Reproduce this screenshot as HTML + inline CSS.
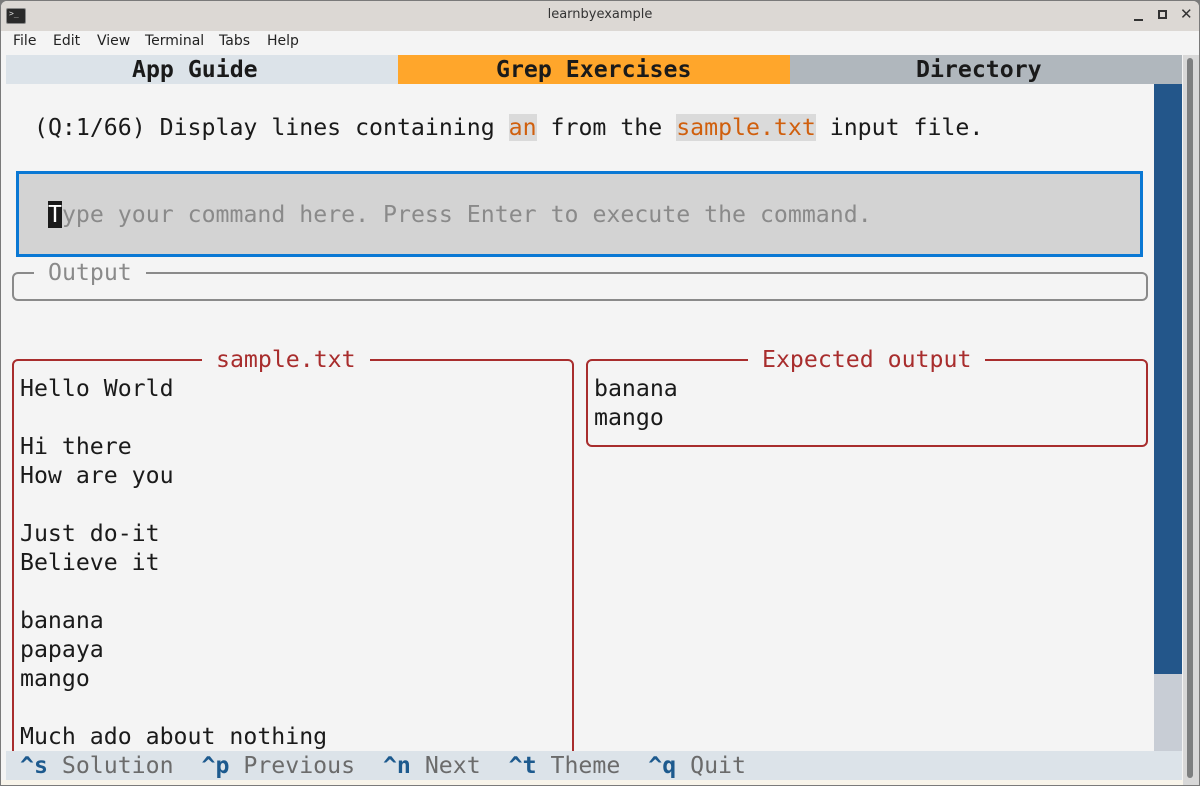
<!DOCTYPE html>
<html><head><meta charset="utf-8"><style>
*{margin:0;padding:0;box-sizing:border-box}
html,body{width:1200px;height:786px;overflow:hidden}
body{background:#7a7a7a;position:relative;font-family:"DejaVu Sans Mono","Liberation Mono",monospace}
.a{position:absolute}
.m{font-family:"DejaVu Sans Mono",monospace;font-size:23.2px;line-height:29px;white-space:pre;color:#1a1a1a}
.ui{font-family:"DejaVu Sans","Liberation Sans",sans-serif;white-space:nowrap}
.mn{position:absolute;top:33px;font-size:14px;color:#222}
</style></head><body>
<div class="a" style="left:1px;top:1px;width:1198px;height:784px;background:#f4f4f4;border-radius:6px 6px 0 0;overflow:hidden">
<div class="a" style="left:0;top:0;width:1198px;height:30px;background:#dcd8d4"></div>
</div>
<div class="a" style="left:6px;top:8px;width:20px;height:16px;background:#2a2a2a;border:1px solid #888;border-radius:2px;color:#ddd;font-size:8px;line-height:10px;padding-left:2px">&gt;_</div>
<div class="a ui" style="left:0;top:7px;width:1200px;text-align:center;font-size:13px;color:#333">learnbyexample</div>
<div class="a" style="left:1134px;top:19px;width:9px;height:2px;background:#333"></div>
<div class="a" style="left:1158px;top:10px;width:9px;height:9px;border:2px solid #333"></div>
<div class="a ui" style="left:1180px;top:5px;font-size:15px;font-weight:bold;color:#333">✕</div>
<div class="ui mn" style="left:13px">File</div>
<div class="ui mn" style="left:53px">Edit</div>
<div class="ui mn" style="left:97px">View</div>
<div class="ui mn" style="left:145px">Terminal</div>
<div class="ui mn" style="left:219px">Tabs</div>
<div class="ui mn" style="left:267px">Help</div>
<div class="a" style="left:6px;top:55px;width:392px;height:29px;background:#dce3e9"></div>
<div class="a" style="left:398px;top:55px;width:392px;height:29px;background:#ffa62b"></div>
<div class="a" style="left:790px;top:55px;width:392px;height:29px;background:#b0b7bd"></div>
<div class="a m" style="left:132px;top:55px;font-weight:bold">App Guide</div>
<div class="a m" style="left:496px;top:55px;font-weight:bold">Grep Exercises</div>
<div class="a m" style="left:916px;top:55px;font-weight:bold">Directory</div>
<div class="a" style="left:1154px;top:84px;width:28px;height:590px;background:#23568a"></div>
<div class="a" style="left:1154px;top:674px;width:28px;height:77px;background:#c8cdd5"></div>
<div class="a" style="left:1183px;top:55px;width:16px;height:730px;background:#d8d8d8"></div>
<div class="a" style="left:1187px;top:58px;width:6px;height:720px;background:#7d7f80;border-radius:3px"></div>
<div class="a m" style="left:34px;top:113px">(Q:1/66) Display lines containing <span style="background:#dadada;color:#d05f0d">an</span> from the <span style="background:#dadada;color:#d05f0d">sample.txt</span> input file.</div>
<div class="a" style="left:16px;top:171px;width:1127px;height:86px;background:#d3d3d3;border:3px solid #0a78d4"></div>
<div class="a m" style="left:48px;top:200px;color:#8a8a8a"><span style="background:#1a1a1a;color:#fff">T</span>ype your command here. Press Enter to execute the command.</div>
<div class="a" style="left:12px;top:272px;width:1136px;height:29px;border:2px solid #8a8a8a;border-radius:6px"></div>
<div class="a m" style="left:34px;top:258px;background:#f4f4f4;color:#8a8a8a;padding:0 14px">Output</div>
<div class="a" style="left:12px;top:359px;width:562px;height:410px;border:2px solid #a82d2d;border-radius:6px"></div>
<div class="a m" style="left:202px;top:345px;background:#f4f4f4;color:#a82d2d;padding:0 14px">sample.txt</div>
<div class="a m" style="left:20px;top:374px">Hello World

Hi there
How are you

Just do-it
Believe it

banana
papaya
mango

Much ado about nothing</div>
<div class="a" style="left:586px;top:359px;width:562px;height:88px;border:2px solid #a82d2d;border-radius:6px"></div>
<div class="a m" style="left:748px;top:345px;background:#f4f4f4;color:#a82d2d;padding:0 14px">Expected output</div>
<div class="a m" style="left:594px;top:374px">banana
mango</div>
<div class="a m" style="left:6px;top:751px;width:1176px;height:29px;background:#dce3e9;color:#6b6b6b;padding-left:14px"><b style="color:#1d5a8e">^s</b> Solution  <b style="color:#1d5a8e">^p</b> Previous  <b style="color:#1d5a8e">^n</b> Next  <b style="color:#1d5a8e">^t</b> Theme  <b style="color:#1d5a8e">^q</b> Quit</div>
<div class="a" style="left:1px;top:780px;width:1182px;height:5px;background:#f8f4ea"></div>
<div class="a" style="left:0;top:785px;width:1200px;height:1px;background:#7a7a7a"></div>
</body></html>
